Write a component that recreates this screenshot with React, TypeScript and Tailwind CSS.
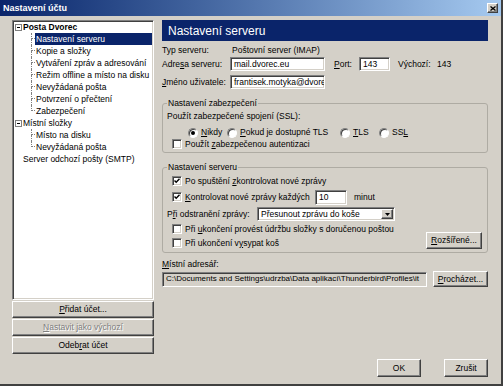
import React from 'react';

const raised =
  'bg-[#d4d0c8] border border-t-white border-l-white border-r-[#404040] border-b-[#404040] shadow-[inset_-1px_-1px_0_#808080]';
const sunken =
  'border border-t-[#808080] border-l-[#808080] border-r-white border-b-white shadow-[inset_1px_1px_0_#404040,inset_-1px_-1px_0_#d4d0c8]';

type Kids = { children?: React.ReactNode; className?: string };

function Button({ children, className = '', disabled = false }: Kids & { disabled?: boolean }) {
  return (
    <div
      className={`${raised} flex items-center justify-center shrink-0 ${
        disabled ? 'text-[#808080] [text-shadow:1px_1px_0_#fff]' : 'text-black'
      } ${className}`}
    >
      {children}
    </div>
  );
}

function Field({ children, className = '' }: Kids) {
  return (
    <div className={`${sunken} bg-white flex items-center px-[3px] overflow-hidden whitespace-nowrap shrink-0 ${className}`}>
      {children}
    </div>
  );
}

function Check({ checked = false, children, className = '' }: Kids & { checked?: boolean }) {
  return (
    <div className={`flex items-center h-[12px] pl-[5px] ${className}`}>
      <span className={`${sunken} bg-white w-[10px] h-[10px] flex items-center justify-center shrink-0`}>
        {checked && (
          <svg width="6" height="6" viewBox="0 0 6 6">
            <path d="M0.5 2.5 L2.2 4.3 L5.5 0.8" fill="none" stroke="#000" strokeWidth="1.4" />
          </svg>
        )}
      </span>
      <span className="ml-[3px] whitespace-nowrap">{children}</span>
    </div>
  );
}

function Radio({ checked = false, children, className = '' }: Kids & { checked?: boolean }) {
  return (
    <div className={`flex items-center shrink-0 ${className}`}>
      <span className="w-[10px] h-[10px] rounded-full bg-white border border-t-[#808080] border-l-[#808080] border-r-white border-b-white shadow-[inset_1px_1px_0_#404040] flex items-center justify-center shrink-0">
        {checked && <span className="w-[4px] h-[4px] rounded-full bg-black" />}
      </span>
      <span className="ml-[3px] whitespace-nowrap">{children}</span>
    </div>
  );
}

function Group({ title, children, className = '' }: Kids & { title: string }) {
  return (
    <fieldset className={`border border-[#aeaba3] rounded-[3px] px-[4px] min-w-0 ${className}`}>
      <legend className="px-[1px] leading-[10px]">{title}</legend>
      {children}
    </fieldset>
  );
}

function Minus() {
  return (
    <span className="w-[7px] h-[7px] border border-[#808080] bg-white flex items-center justify-center shrink-0">
      <span className="w-[3px] h-[1px] bg-black" />
    </span>
  );
}

function TreeRoot({ label, bold = false, expander = true }: { label: string; bold?: boolean; expander?: boolean }) {
  return (
    <div className="h-[12px] flex items-center pl-[1px]">
      {expander ? <Minus /> : <span className="w-[7px] shrink-0" />}
      <span className={`ml-[1px] whitespace-nowrap ${bold ? 'font-bold' : ''}`}>{label}</span>
    </div>
  );
}

function TreeChild({ label, last = false, selected = false }: { label: string; last?: boolean; selected?: boolean }) {
  return (
    <div className="h-[12px] flex pl-[17px]">
      <div className="w-[4px] flex flex-col shrink-0">
        <div className="h-[6px] border-l border-b border-dotted border-[#808080]" />
        <div className={`flex-1 ${last ? '' : 'border-l border-dotted border-[#808080]'}`} />
      </div>
      <div className={`flex-1 flex items-center pl-[1px] whitespace-nowrap ${selected ? 'bg-[#0a246a] text-white' : ''}`}>
        {label}
      </div>
    </div>
  );
}

export default function App() {
  return (
    <div className="w-[503px] h-[386px] flex flex-col bg-[#d4d0c8] text-black text-[8.5px] leading-none font-['Liberation_Sans',Arial,sans-serif] border-r-2 border-b-2 border-r-[#404040] border-b-[#404040] overflow-hidden">
      {/* title bar */}
      <div className="h-[16px] shrink-0 flex items-center justify-between pl-[3px] pr-[3px] bg-linear-to-r from-[#0a246a] to-[#a6caf0]">
        <span className="text-white font-bold text-[9px]">Nastavení účtu</span>
        <Button className="w-[11px] h-[10px]">
          <svg width="6" height="5" viewBox="0 0 6 5">
            <path d="M0.5 0.5 L5.5 4.5 M5.5 0.5 L0.5 4.5" stroke="#000" strokeWidth="1.3" />
          </svg>
        </Button>
      </div>

      <div className="flex-1 flex pt-[4px] pl-[12px]">
        {/* left column */}
        <div className="w-[142px] flex flex-col shrink-0">
          <div className={`${sunken} bg-white h-[280px] pl-[1px] pr-[1px]`}>
            <TreeRoot label="Posta Dvorec" bold />
            <TreeChild label="Nastavení serveru" selected />
            <TreeChild label="Kopie a složky" />
            <TreeChild label="Vytváření zpráv a adresování" />
            <TreeChild label="Režim offline a místo na disku" />
            <TreeChild label="Nevyžádaná pošta" />
            <TreeChild label="Potvrzení o přečtení" />
            <TreeChild label="Zabezpečení" last />
            <TreeRoot label="Místní složky" />
            <TreeChild label="Místo na disku" />
            <TreeChild label="Nevyžádaná pošta" last />
            <TreeRoot label="Server odchozí pošty (SMTP)" expander={false} />
          </div>
          <div className="flex flex-col gap-[1px] mt-[1px]">
            <Button className="h-[17px]">
              <span><u>P</u>řidat účet...</span>
            </Button>
            <Button className="h-[17px]" disabled>
              <span><u>N</u>astavit jako výchozí</span>
            </Button>
            <Button className="h-[17px]">
              <span>Odeb<u>r</u>at účet</span>
            </Button>
          </div>
        </div>

        {/* right column */}
        <div className="flex-1 min-w-0 flex flex-col pl-[8px] pr-[13px] pb-[7px]">
          <div className="h-[21px] shrink-0 bg-[#0a246a] text-white text-[12px] pl-[6px] flex items-center">
            Nastavení serveru
          </div>

          <div className="h-[12px] mt-[3px] flex items-center">
            <span className="w-[70px] shrink-0">Typ serveru:</span>
            <span>Poštovní server (IMAP)</span>
          </div>

          <div className="h-[14px] mt-[1px] flex items-center">
            <span className="w-[68px] shrink-0">Adre<u>s</u>a serveru:</span>
            <Field className="w-[95px] h-[14px]">mail.dvorec.eu</Field>
            <span className="ml-[9px] w-[25px] shrink-0"><u>P</u>ort:</span>
            <Field className="w-[31px] h-[14px]">143</Field>
            <span className="ml-[8px] w-[39px] shrink-0">Výchozí:</span>
            <span>143</span>
          </div>

          <div className="h-[14px] mt-[4px] flex items-center">
            <span className="w-[68px] shrink-0"><u>J</u>méno uživatele:</span>
            <Field className="w-[95px] h-[14px] pr-0">frantisek.motyka@dvore</Field>
          </div>

          <Group title="Nastavení zabezpečení" className="mt-[9px] pb-[2px]">
            <div className="h-[11px] mt-[3px] flex items-center">Použít zabezpečené spojení (SSL):</div>
            <div className="h-[11px] mt-[5px] flex items-center pl-[21px]">
              <Radio checked className="w-[39px]"><u>N</u>ikdy</Radio>
              <Radio className="w-[113px]"><u>P</u>okud je dostupné TLS</Radio>
              <Radio className="w-[39px]"><u>T</u>LS</Radio>
              <Radio>SS<u>L</u></Radio>
            </div>
            <Check className="h-[11px]">Použít <u>z</u>abezpečenou autentizaci</Check>
          </Group>

          <Group title="Nastavení serveru" className="mt-[9px] pb-[3px]">
            <Check checked className="mt-[3px]">Po spuštění <u>z</u>kontrolovat nové zprávy</Check>
            <div className="h-[16px] mt-[2px] flex items-center">
              <Check checked className="w-[148px]"><u>K</u>ontrolovat nové zprávy každých</Check>
              <Field className="w-[32px] h-[15px]">10</Field>
              <span className="ml-[7px]">minut</span>
            </div>
            <div className="h-[14px] mt-[2px] flex items-center">
              <span className="w-[90px] shrink-0">P<u>ř</u>i odstranění zprávy:</span>
              <div className={`${sunken} bg-white w-[138px] h-[14px] flex items-center shrink-0 pl-[3px] pr-[1px]`}>
                <span className="flex-1 whitespace-nowrap overflow-hidden">Přesunout zprávu do koše</span>
                <Button className="w-[12px] h-[10px]">
                  <svg width="5" height="3" viewBox="0 0 5 3">
                    <path d="M0 0 H5 L2.5 3 Z" fill="#000" />
                  </svg>
                </Button>
              </div>
            </div>
            <div className="flex items-end mt-[2px]">
              <div className="flex-1 flex flex-col gap-[2px]">
                <Check>Při <u>u</u>končení provést údržbu složky s doručenou poštou</Check>
                <Check>Při ukončení v<u>y</u>sypat koš</Check>
              </div>
              <Button className="w-[56px] h-[17px] mr-[1px]">
                <span><u>R</u>ozšířené...</span>
              </Button>
            </div>
          </Group>

          <div className="h-[12px] mt-[5px] flex items-center">
            <span><u>M</u>ístní adresář:</span>
          </div>
          <div className="h-[16px] mt-[1px] flex items-center gap-[6px]">
            <div className={`${sunken} bg-[#d4d0c8] flex-1 min-w-0 h-[15px] flex items-center pl-[3px] pr-0 text-[8px] overflow-hidden whitespace-nowrap`}>
              {'C:\\Documents and Settings\\udrzba\\Data aplikací\\Thunderbird\\Profiles\\it'}
            </div>
            <Button className="w-[55px] h-[16px]">
              <span><u>P</u>rocházet...</span>
            </Button>
          </div>

          <div className="flex-1" />
          <div className="flex justify-end gap-[23px]">
            <Button className="w-[44px] h-[18px]">OK</Button>
            <Button className="w-[44px] h-[18px]">Zrušit</Button>
          </div>
        </div>
      </div>
    </div>
  );
}
